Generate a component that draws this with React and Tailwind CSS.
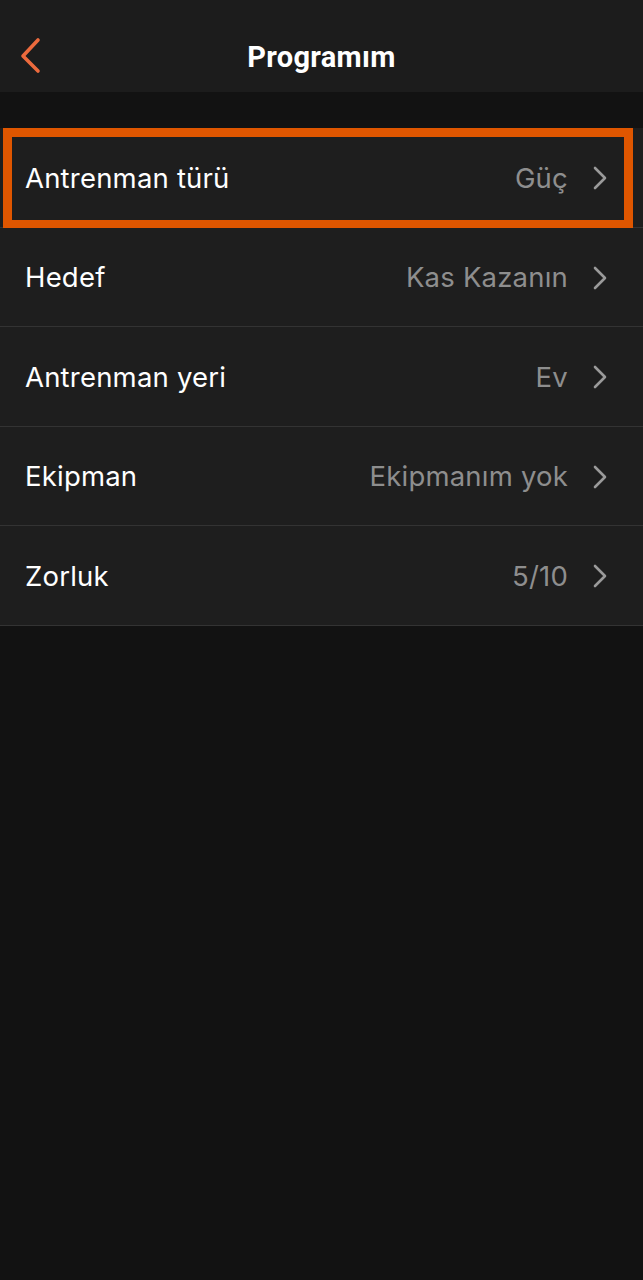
const rows = [
  { label: "Antrenman türü", value: "Güç", highlight: true },
  { label: "Hedef", value: "Kas Kazanın" },
  { label: "Antrenman yeri", value: "Ev" },
  { label: "Ekipman", value: "Ekipmanım yok" },
  { label: "Zorluk", value: "5/10" },
];

const Chevron = () => (
  <svg width="16" height="26" viewBox="0 0 16 26" className="shrink-0">
    <path d="M3 3 L13 13 L3 23" fill="none" stroke="#9a9a9a" strokeWidth="2.6" strokeLinecap="round" strokeLinejoin="round" />
  </svg>
);

function Row({ label, value, highlight }) {
  return (
    <div className="relative flex items-center h-[99.5px] pl-[25px] pr-[35px] pt-[2px] border-b border-[#333333] bg-[#1e1e1e]">
      <span className="flex-1 text-[27.5px] text-white tracking-[0.2px]">{label}</span>
      <span className="text-[27.5px] text-[#8e8e8e] tracking-[0.2px] mr-[24px]">{value}</span>
      <Chevron />
      {highlight && (
        <div className="absolute left-[3px] right-[10px] top-0 bottom-[-2px] border-[9px] border-[#df5600] pointer-events-none" />
      )}
    </div>
  );
}

export default function App() {
  return (
    <div className="min-h-[1280px] bg-[#121212] font-['Inter','Noto_Sans',sans-serif]">
      <header className="relative flex items-center justify-center h-[92px] pt-[24px] bg-[#1c1c1c]">
        <button className="absolute left-[18px] top-[36px]">
          <svg width="26" height="40" viewBox="0 0 26 40">
            <path d="M20 4 L5 20 L20 35" fill="none" stroke="#ec6a3d" strokeWidth="3.6" strokeLinecap="round" strokeLinejoin="round" />
          </svg>
        </button>
        <h1 className="text-[29px] font-bold text-white font-['Roboto',sans-serif] tracking-[0.3px]">Programım</h1>
      </header>
      <div className="h-[36px]" />
      <div>
        {rows.map((r) => (
          <Row key={r.label} {...r} />
        ))}
      </div>
    </div>
  );
}
